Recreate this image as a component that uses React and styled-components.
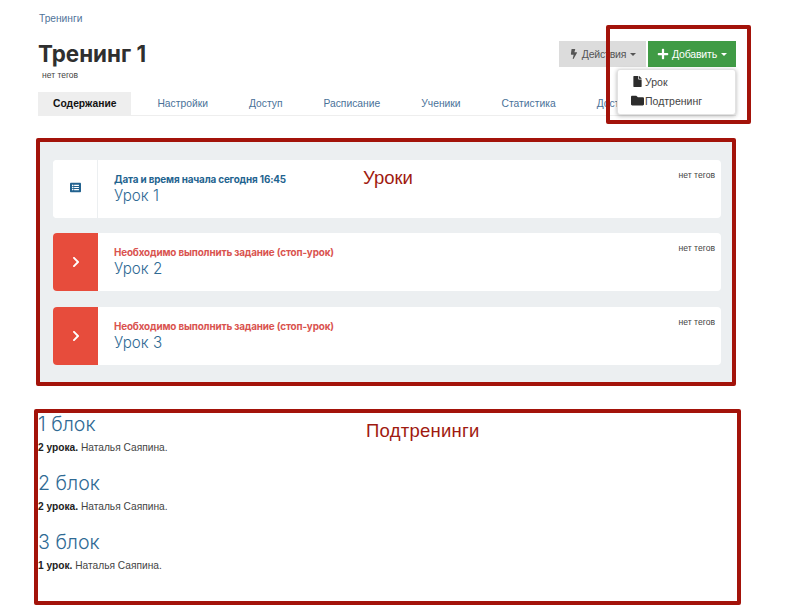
import React from "react";
import styled, { createGlobalStyle } from "styled-components";
import { FaBolt, FaPlus, FaFile, FaFolder, FaListAlt, FaChevronRight } from "react-icons/fa";

const Global = createGlobalStyle`
  html, body { margin: 0; padding: 0; background: #fff; }
  body { font-family: "Liberation Sans", Arial, sans-serif; color: #333; }
  * { box-sizing: border-box; }
`;

const Page = styled.div`
  position: relative;
  width: 807px;
  height: 611px;
  overflow: hidden;
  padding-top: 12px;
`;

const Header = styled.header`
  margin: 0 71px 0 38px;
`;

const Crumb = styled.a`
  display: block;
  margin-left: 1px;
  height: 13px;
  font-size: 10.2px;
  line-height: 13px;
  color: #4f7399;
`;

const TitleRow = styled.div`
  display: flex;
  justify-content: space-between;
  align-items: flex-start;
  margin-top: 16px;
  height: 51px;
`;

const TitleBlock = styled.div`
  display: flex;
  flex-direction: column;
  margin-top: -1px;
`;

const Title = styled.h1`
  margin: 0;
  font-family: Inter, sans-serif;
  font-size: 22.4px;
  font-weight: 700;
  line-height: 28px;
  color: #2f2f2f;
`;

const TitleTags = styled.span`
  margin: 2px 0 0 4px;
  font-size: 8.5px;
  line-height: 10px;
  color: #444;
`;

const Buttons = styled.div`
  display: flex;
  gap: 2px;
`;

const Button = styled.div`
  display: flex;
  align-items: center;
  justify-content: center;
  gap: 3px;
  height: 26px;
  width: ${(p) => p.$width}px;
  background: ${(p) => (p.$green ? "#409b45" : "#dcdcdc")};
  color: ${(p) => (p.$green ? "#fff" : "#555")};
  font-size: 10.5px;
  letter-spacing: -0.2px;
`;

const Caret = styled.span`
  width: 0;
  height: 0;
  margin-left: 1px;
  border-left: 3px solid transparent;
  border-right: 3px solid transparent;
  border-top: 3px solid currentColor;
`;

const Tabs = styled.nav`
  display: flex;
  gap: 11px;
  height: 24px;
  border-bottom: 1px solid #eee;
  overflow: hidden;
  white-space: nowrap;
`;

const Tab = styled.a`
  flex: none;
  padding: 0 15px;
  height: 23px;
  line-height: 23px;
  font-size: 10.3px;
  background: ${(p) => (p.$active ? "#eeeeee" : "transparent")};
  color: ${(p) => (p.$active ? "#111" : "#4a7299")};
  font-weight: ${(p) => (p.$active ? 700 : 400)};
`;

const Dropdown = styled.div`
  position: absolute;
  left: 617px;
  top: 69px;
  width: 119px;
  height: 46px;
  padding: 2px 0;
  background: #fff;
  border-radius: 3px;
  border: 1px solid #e2e2e2;
  box-shadow: 0 1px 4px rgba(0, 0, 0, 0.3);
  z-index: 2;
`;

const MenuItem = styled.div`
  display: flex;
  align-items: center;
  gap: 1px;
  height: 19px;
  padding-left: 13px;
  font-size: 10.5px;
  color: #444;
`;

const MenuIcon = styled.span`
  flex: none;
  width: 13px;
  display: flex;
  justify-content: center;
  color: #2c2c2c;
`;

const Callout = styled.div`
  position: absolute;
  left: 606px;
  top: 25px;
  width: 145px;
  height: 99px;
  border: 4px solid #a3130a;
  border-radius: 2px;
  z-index: 3;
  pointer-events: none;
`;

const LessonsPanel = styled.section`
  position: relative;
  width: 700px;
  height: 248px;
  margin: 22px 0 0 36px;
  padding: 18px 13px 0;
  display: flex;
  flex-direction: column;
  gap: 15.4px;
  background: #eceff1;
  border: 4px solid #a3130a;
  border-radius: 2px;
`;

const Lesson = styled.article`
  display: flex;
  height: 58px;
  width: 668px;
  flex: none;
  background: #fff;
  border-radius: 4px;
  overflow: hidden;
`;

const LessonIcon = styled.div`
  flex: none;
  width: 45px;
  display: flex;
  align-items: center;
  justify-content: center;
  padding-bottom: ${(p) => (p.$stop ? "0" : "4px")};
  background: ${(p) => (p.$stop ? "#e74c3c" : "#fff")};
  color: ${(p) => (p.$stop ? "#fff" : "#22628f")};
  border-right: ${(p) => (p.$stop ? "0" : "1px solid #eceff1")};
`;

const LessonBody = styled.div`
  flex: 1;
  padding: 13px 0 0 16px;
`;

const LessonNote = styled.div`
  font-family: Inter, sans-serif;
  font-size: 9.9px;
  font-weight: 700;
  line-height: 12px;
  letter-spacing: -0.15px;
  color: ${(p) => (p.$stop ? "#d9534f" : "#1f6490")};
`;

const LessonTitle = styled.a`
  display: block;
  margin-top: 1px;
  font-family: Inter, sans-serif;
  font-size: 15.2px;
  font-weight: 300;
  line-height: 19px;
  color: #2f6a94;
`;

const LessonTags = styled.span`
  flex: none;
  padding: 10px 6px 0 0;
  font-size: 8.6px;
  line-height: 10px;
  color: #444;
`;

const PanelLabel = styled.div`
  position: absolute;
  font-size: ${(p) => p.$size}px;
  line-height: 20px;
  letter-spacing: ${(p) => p.$spacing || 0}px;
  color: #a01a10;
  left: ${(p) => p.$left}px;
  top: ${(p) => p.$top}px;
`;

const BlocksPanel = styled.section`
  position: relative;
  width: 707px;
  height: 196px;
  margin: 23px 0 0 34px;
  border: 4px solid #a3130a;
  border-radius: 2px;
`;

const Block = styled.div`
  height: 59px;
`;

const BlockTitle = styled.a`
  display: block;
  font-family: Inter, sans-serif;
  font-size: 19.6px;
  font-weight: 300;
  line-height: 23px;
  color: #2f6a94;
`;

const BlockMeta = styled.div`
  margin-top: 5px;
  font-size: 10.2px;
  line-height: 13px;
  color: #444;
  b { color: #222; }
`;

const lessons = [
  { id: 1, note: "Дата и время начала сегодня 16:45", title: "Урок 1" },
  { id: 2, note: "Необходимо выполнить задание (стоп-урок)", title: "Урок 2", stop: true },
  { id: 3, note: "Необходимо выполнить задание (стоп-урок)", title: "Урок 3", stop: true },
];

const blocks = [
  { title: "1 блок", count: "2 урока." },
  { title: "2 блок", count: "2 урока." },
  { title: "3 блок", count: "1 урок." },
];

const tabs = ["Содержание", "Настройки", "Доступ", "Расписание", "Ученики", "Статистика", "Дост"];

export default function App() {
  return (
    <Page>
      <Global />
      <Header>
        <Crumb>Тренинги</Crumb>
        <TitleRow>
          <TitleBlock>
            <Title>Тренинг 1</Title>
            <TitleTags>нет тегов</TitleTags>
          </TitleBlock>
          <Buttons>
            <Button $width={87}>
              <FaBolt size={10} /> Действия <Caret />
            </Button>
            <Button $width={88} $green>
              <FaPlus size={12} /> Добавить <Caret />
            </Button>
          </Buttons>
        </TitleRow>
        <Tabs>
          {tabs.map((t, i) => (
            <Tab key={t} $active={i === 0}>{t}</Tab>
          ))}
        </Tabs>
      </Header>
      <Dropdown>
        <MenuItem><MenuIcon><FaFile size={11} /></MenuIcon> Урок</MenuItem>
        <MenuItem><MenuIcon><FaFolder size={13} /></MenuIcon> Подтренинг</MenuItem>
      </Dropdown>
      <Callout />
      <LessonsPanel>
        {lessons.map((l) => (
          <Lesson key={l.id}>
            <LessonIcon $stop={l.stop}>
              {l.stop ? <FaChevronRight size={12} /> : <FaListAlt size={11} />}
            </LessonIcon>
            <LessonBody>
              <LessonNote $stop={l.stop}>{l.note}</LessonNote>
              <LessonTitle>{l.title}</LessonTitle>
            </LessonBody>
            <LessonTags>нет тегов</LessonTags>
          </Lesson>
        ))}
        <PanelLabel $size={18.5} $left={323} $top={26}>Уроки</PanelLabel>
      </LessonsPanel>
      <BlocksPanel>
        {blocks.map((b) => (
          <Block key={b.title}>
            <BlockTitle>{b.title}</BlockTitle>
            <BlockMeta><b>{b.count}</b> Наталья Саяпина.</BlockMeta>
          </Block>
        ))}
        <PanelLabel $size={18.5} $spacing={0.25} $left={328} $top={8}>Подтренинги</PanelLabel>
      </BlocksPanel>
    </Page>
  );
}
